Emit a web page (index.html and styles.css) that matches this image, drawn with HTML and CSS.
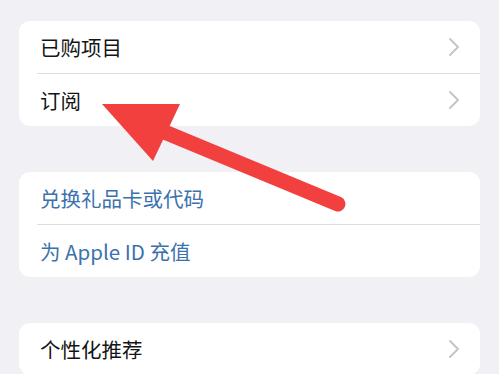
FILE: index.html
```html
<!DOCTYPE html>
<html lang="zh">
<head>
<meta charset="utf-8">
<link rel="stylesheet" href="styles.css">
</head>
<body>
<div class="page">
  <div class="card">
    <div class="row"><span class="label">已购项目</span><svg class="chev" viewBox="0 0 10 18"><path d="M1 1 L9 9 L1 17"/></svg></div>
    <div class="row"><span class="label">订阅</span><svg class="chev" viewBox="0 0 10 18"><path d="M1 1 L9 9 L1 17"/></svg></div>
  </div>
  <div class="card">
    <div class="row"><span class="label link">兑换礼品卡或代码</span></div>
    <div class="row"><span class="label link">为 Apple ID 充值</span></div>
  </div>
  <div class="card">
    <div class="row"><span class="label">个性化推荐</span><svg class="chev" viewBox="0 0 10 18"><path d="M1 1 L9 9 L1 17"/></svg></div>
  </div>
</div>
<svg class="arrow" viewBox="0 0 499 374" width="499" height="374">
  <polygon points="102,104 180,104 153,161" fill="#f2403f"/>
  <line x1="150" y1="126" x2="338" y2="204" stroke="#f2403f" stroke-width="15" stroke-linecap="round"/>
</svg>
</body>
</html>
```
FILE: styles.css
```css
html, body {
  margin: 0;
  padding: 0;
  background: #f0f0f5;
}
body {
  width: 499px;
  height: 374px;
  overflow: hidden;
  position: relative;
  font-family: "Noto Sans CJK SC", "Noto Sans", sans-serif;
}
.page {
  padding: 21px 19px 0 19px;
  display: flex;
  flex-direction: column;
  gap: 46px;
}
.card {
  background: #ffffff;
  border-radius: 11px;
  overflow: hidden;
  display: flex;
  flex-direction: column;
}
.row {
  height: 52px;
  display: flex;
  align-items: center;
  justify-content: space-between;
  padding: 0 21px 0 21px;
  position: relative;
}
.row + .row {
  border-top: 1px solid #dedee2;
}
.row + .row::before {
  content: none;
}
.card .row + .row {
  margin-left: 18px;
  padding-left: 3px;
}
.label {
  font-size: 20.5px;
  color: #141414;
  line-height: 1;
}
.link {
  color: #3b72ad;
}
.chev {
  width: 10px;
  height: 18px;
  fill: none;
  stroke: #c3c3c7;
  stroke-width: 1.8;
  stroke-linecap: round;
  stroke-linejoin: round;
}
.arrow {
  position: absolute;
  left: 0;
  top: 0;
  pointer-events: none;
}
```
